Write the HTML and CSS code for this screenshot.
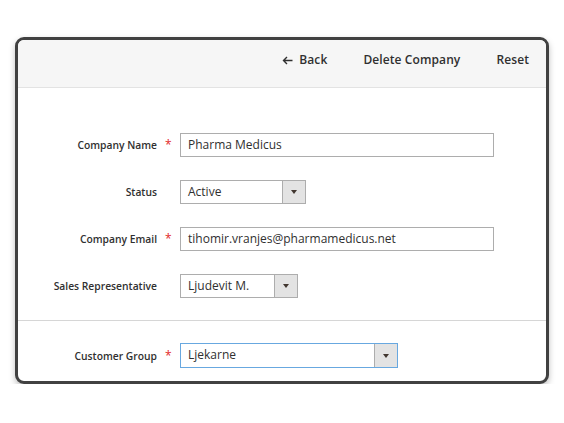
FILE: index.html
```html
<!DOCTYPE html>
<html>
<head>
<meta charset="utf-8">
<link rel="stylesheet" href="styles.css">
</head>
<body>
<div class="page">
  <div class="card">
    <div class="header">
      <span class="action back">
        <svg class="back-icon" width="11" height="9" viewBox="0 0 11 9"><path d="M10.5 4.5H1.5M5 1L1.5 4.5L5 8" fill="none" stroke="#303030" stroke-width="1.4"/></svg>
        Back
      </span>
      <span class="action">Delete Company</span>
      <span class="action">Reset</span>
    </div>
    <div class="section">
      <div class="row">
        <label class="label required">Company Name</label>
        <div class="control"><div class="input w-long">Pharma Medicus</div></div>
      </div>
      <div class="row">
        <label class="label">Status</label>
        <div class="control"><div class="select w-status"><span class="value">Active</span><span class="arrow"></span></div></div>
      </div>
      <div class="row">
        <label class="label required">Company Email</label>
        <div class="control"><div class="input w-long">tihomir.vranjes@pharmamedicus.net</div></div>
      </div>
      <div class="row">
        <label class="label">Sales Representative</label>
        <div class="control"><div class="select w-sales"><span class="value">Ljudevit M.</span><span class="arrow"></span></div></div>
      </div>
    </div>
    <div class="section second">
      <div class="row">
        <label class="label required">Customer Group</label>
        <div class="control"><div class="select w-group focus"><span class="value">Ljekarne</span><span class="arrow"></span></div></div>
      </div>
    </div>
  </div>
</div>
</body>
</html>
```

FILE: styles.css
```css
* { box-sizing: border-box; }
html, body { margin: 0; padding: 0; background: #ffffff; }
body { font-family: "Open Sans", "DejaVu Sans", sans-serif; color: #303030; }
.page { padding: 37px 15px 0 15px; }
.card {
  width: 534px;
  border: 3px solid #414141;
  border-radius: 9px;
  overflow: hidden;
  background: #ffffff;
  box-shadow: 0 3px 6px rgba(0, 0, 0, 0.25);
}
.header {
  height: 48px;
  background: #f6f6f6;
  border-bottom: 1px solid #e3e3e3;
  display: flex;
  justify-content: flex-end;
  align-items: flex-start;
  gap: 36px;
  padding: 12px 17px 0 0;
}
.action {
  font-size: 12px;
  line-height: 16px;
  font-weight: 600;
  color: #303030;
  display: inline-flex;
  align-items: center;
  letter-spacing: 0.1px;
}
.back-icon { margin-right: 6px; }
.section {
  padding: 45px 0 22px 0;
  display: flex;
  flex-direction: column;
  gap: 23px;
}
.section.second {
  border-top: 1px solid #d6d6d6;
  padding: 22px 0 13px 0;
}
.row {
  display: grid;
  grid-template-columns: 139px 1fr;
  column-gap: 23px;
  align-items: center;
}
.label {
  text-align: right;
  font-size: 10.3px;
  font-weight: 600;
  line-height: 16px;
  position: relative;
}
.label.required::after {
  content: "*";
  position: absolute;
  left: calc(100% + 8px);
  top: 0;
  color: #e22626;
  font-size: 12px;
  font-weight: 400;
}
.control { display: flex; }
.input, .select {
  height: 24px;
  border: 1px solid #adadad;
  background: #ffffff;
  font-size: 12px;
  line-height: 22px;
  color: #303030;
}
.input { padding-left: 7px; }
.w-long { width: 314px; }
.select { display: flex; }
.select .value { flex: 1; padding-left: 7px; }
.select .arrow {
  width: 23px;
  border-left: 1px solid #adadad;
  background: #e3e3e3;
  display: flex;
  align-items: center;
  justify-content: center;
}
.select .arrow::before {
  content: "";
  width: 0;
  height: 0;
  border-left: 3px solid transparent;
  border-right: 3px solid transparent;
  border-top: 4px solid #41362f;
}
.w-status { width: 126px; }
.w-sales { width: 118px; }
.w-group { width: 218px; height: 25px; }
.select.focus { border-color: #68a8e0; }
```
